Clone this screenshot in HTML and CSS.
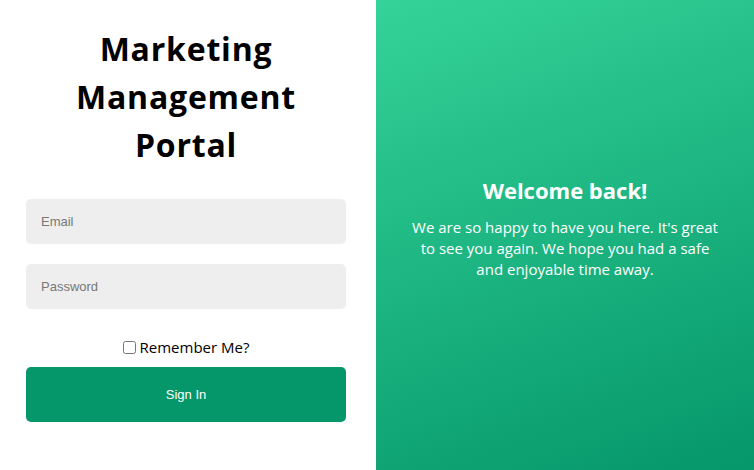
FILE: index.html
```html
<!DOCTYPE html>
<html>
<head>
<meta charset="utf-8">
<link rel="stylesheet" href="styles.css">
</head>
<body>
<div class="page">
  <div class="left">
    <h1 class="title">Marketing Management Portal</h1>
    <form class="form">
      <input class="field" type="email" placeholder="Email">
      <input class="field" type="password" placeholder="Password">
      <label class="remember"><input type="checkbox" class="check">Remember Me?</label>
      <button type="button" class="btn">Sign In</button>
    </form>
  </div>
  <div class="right">
    <div class="welcome">
      <h2 class="welcome-title">Welcome back!</h2>
      <p class="welcome-text">We are so happy to have you here. It's great to see you again. We hope you had a safe and enjoyable time away.</p>
    </div>
  </div>
</div>
</body>
</html>
```

FILE: styles.css
```css
html, body {
  margin: 0;
  padding: 0;
  background: #fff;
}
.page {
  display: flex;
  width: 754px;
  height: 470px;
  font-family: "Open Sans", "Liberation Sans", sans-serif;
}
.left {
  width: 376px;
  box-sizing: border-box;
  padding: 25px 30px 0 26px;
  display: flex;
  flex-direction: column;
}
.title {
  margin: 0 auto;
  width: 260px;
  text-align: center;
  font-size: 32px;
  font-weight: 700;
  letter-spacing: 0.8px;
  line-height: 48px;
  color: #000;
}
.form {
  margin-top: 30px;
  display: flex;
  flex-direction: column;
}
.field {
  height: 45px;
  box-sizing: border-box;
  border: none;
  border-radius: 5px;
  background: #eeeeee;
  padding: 0 15px;
  font-family: "Liberation Sans", Arial, sans-serif;
  font-size: 13px;
  color: #333;
  margin-bottom: 20px;
  outline: none;
}
.field::placeholder {
  color: #777;
}
.remember {
  display: flex;
  justify-content: center;
  align-items: center;
  height: 20px;
  margin-top: 8px;
  margin-bottom: 10px;
  font-size: 15px;
  color: #000;
}
.check {
  width: 13px;
  height: 13px;
  margin: 0 4px 0 0;
}
.btn {
  height: 55px;
  border: none;
  border-radius: 5px;
  background: #059669;
  color: #fff;
  font-family: "Liberation Sans", Arial, sans-serif;
  font-size: 13px;
}
.right {
  flex: 1;
  background: linear-gradient(160deg, #34d399 0%, #059669 100%);
  display: flex;
  align-items: center;
  justify-content: center;
  color: #fff;
}
.welcome {
  width: 312px;
  text-align: center;
  margin-top: -16px;
}
.welcome-title {
  margin: 0 0 12px 0;
  font-size: 22px;
  font-weight: 700;
  line-height: 30px;
}
.welcome-text {
  margin: 0;
  font-size: 15px;
  line-height: 21px;
}
```
